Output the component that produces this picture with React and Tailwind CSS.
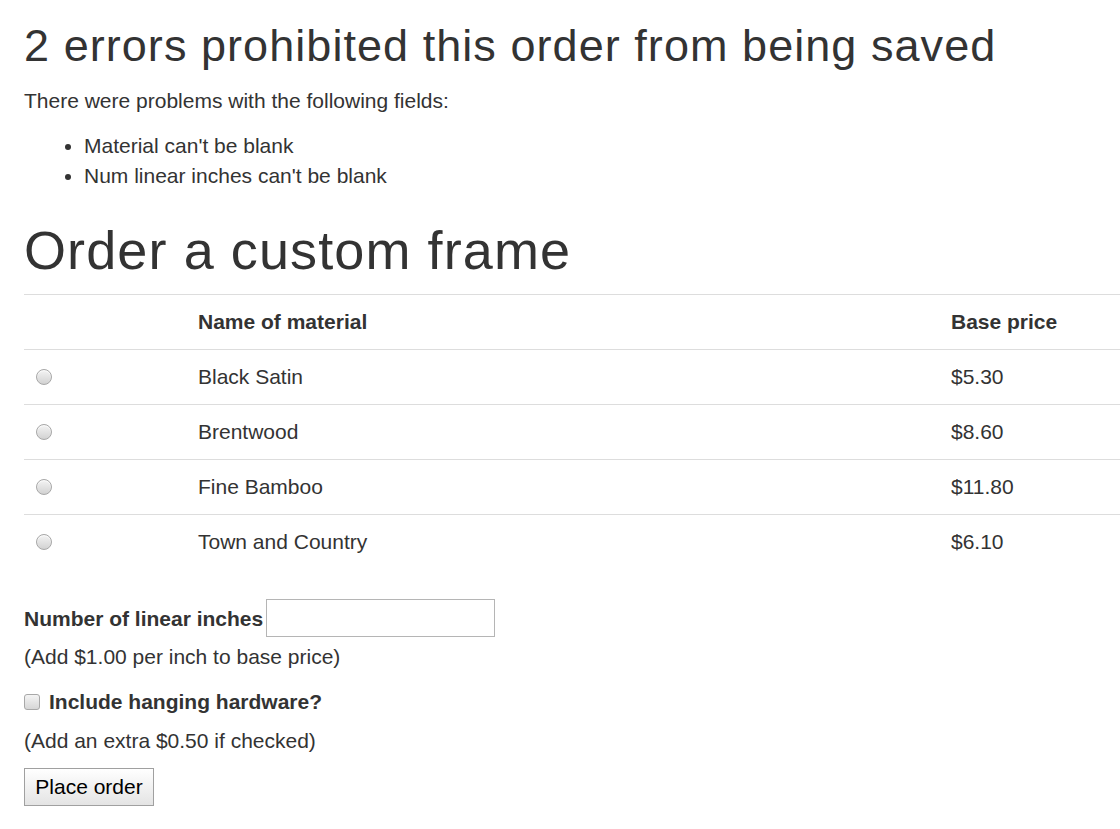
import React from 'react';

const materials = [
  { name: 'Black Satin', price: '$5.30' },
  { name: 'Brentwood', price: '$8.60' },
  { name: 'Fine Bamboo', price: '$11.80' },
  { name: 'Town and Country', price: '$6.10' },
];

export default function App() {
  return (
    <div className="min-h-screen bg-white text-[#333] text-[21px] leading-[30px] pl-[24px] overflow-hidden" style={{ fontFamily: '"Liberation Sans", Arial, sans-serif' }}>
      <div className="pt-[21px]">
        <h2 className="text-[45px] leading-[49.5px] tracking-[1.05px] font-normal mb-[15px]">2 errors prohibited this order from being saved</h2>
        <p className="mb-[15px]">There were problems with the following fields:</p>
        <ul className="list-disc pl-[60px] mb-[30px]">
          <li>Material can't be blank</li>
          <li>Num linear inches can't be blank</li>
        </ul>
        <h1 className="text-[54px] leading-[59.4px] tracking-[1.1px] font-normal mb-[14px]">Order a custom frame</h1>
      </div>

      <table className="w-full border-collapse mb-[30px]">
        <tbody>
          <tr className="border-t border-[#ddd]">
            <th className="w-[162px] p-[12px] text-left"></th>
            <th className="w-[753px] p-[12px] text-left font-bold">Name of material</th>
            <th className="p-[12px] text-left font-bold">Base price</th>
          </tr>
          {materials.map((m) => (
            <tr key={m.name} className="border-t border-[#ddd]">
              <td className="p-[12px] align-middle">
                <input
                  type="radio"
                  name="material"
                  className="appearance-none block w-[16px] h-[16px] rounded-full border border-[#a8a8a8] bg-gradient-to-b from-[#f4f4f4] to-[#d2d2d2] shadow-[inset_0_1px_1px_rgba(255,255,255,0.8)]"
                />
              </td>
              <td className="p-[12px]">{m.name}</td>
              <td className="p-[12px]">{m.price}</td>
            </tr>
          ))}
        </tbody>
      </table>

      <div className="flex items-center gap-[3px] h-[38px]">
        <label className="font-bold pt-[3px]">Number of linear inches</label>
        <input type="text" className="w-[229px] h-[38px] border border-[#b5b5b5] bg-white outline-none" />
      </div>
      <p className="mt-[5px]">(Add $1.00 per inch to base price)</p>

      <div className="flex items-center mt-[15px]">
        <input
          type="checkbox"
          className="appearance-none block w-[16px] h-[16px] rounded-[3px] border border-[#a8a8a8] bg-gradient-to-b from-[#f4f4f4] to-[#d6d6d6] mr-[9px]"
        />
        <label className="font-bold">Include hanging hardware?</label>
      </div>
      <p className="mt-[9px]">(Add an extra $0.50 if checked)</p>

      <button
        type="button"
        className="mt-[12px] w-[130px] h-[38px] border border-[#a0a0a0] bg-gradient-to-b from-white to-[#e4e4e4] text-black text-[21px] leading-[30px]"
      >
        Place order
      </button>
    </div>
  );
}
